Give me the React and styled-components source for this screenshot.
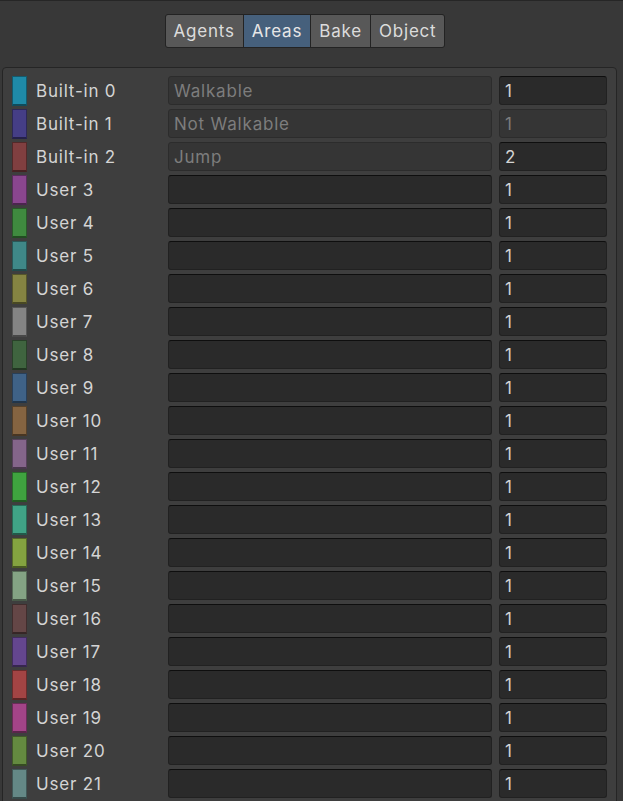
import React from 'react';
import styled, { createGlobalStyle } from 'styled-components';

const GlobalStyle = createGlobalStyle`
  html, body {
    margin: 0;
    padding: 0;
    background: #383838;
    overflow: hidden;
  }
  body {
    font-family: Inter, "Noto Sans", "Liberation Sans", sans-serif;
  }
`;

const areas = [
  { name: 'Built-in 0', color: '#1f8aa8', label: 'Walkable', cost: '1', builtIn: true },
  { name: 'Built-in 1', color: '#453e86', label: 'Not Walkable', cost: '1', builtIn: true, locked: true },
  { name: 'Built-in 2', color: '#803f40', label: 'Jump', cost: '2', builtIn: true },
  { name: 'User 3', color: '#8a468f', cost: '1' },
  { name: 'User 4', color: '#3f8a3f', cost: '1' },
  { name: 'User 5', color: '#3f8888', cost: '1' },
  { name: 'User 6', color: '#858442', cost: '1' },
  { name: 'User 7', color: '#848484', cost: '1' },
  { name: 'User 8', color: '#3f643f', cost: '1' },
  { name: 'User 9', color: '#3f6287', cost: '1' },
  { name: 'User 10', color: '#856441', cost: '1' },
  { name: 'User 11', color: '#84658a', cost: '1' },
  { name: 'User 12', color: '#3fa33f', cost: '1' },
  { name: 'User 13', color: '#40a386', cost: '1' },
  { name: 'User 14', color: '#84a340', cost: '1' },
  { name: 'User 15', color: '#84a384', cost: '1' },
  { name: 'User 16', color: '#644646', cost: '1' },
  { name: 'User 17', color: '#64468f', cost: '1' },
  { name: 'User 18', color: '#a34444', cost: '1' },
  { name: 'User 19', color: '#a34488', cost: '1' },
  { name: 'User 20', color: '#648a40', cost: '1' },
  { name: 'User 21', color: '#648886', cost: '1' },
];

const tabs = ['Agents', 'Areas', 'Bake', 'Object'];

export default function App() {
  return (
    <Root>
      <GlobalStyle />
      <Toolbar>
        <TabGroup>
          {tabs.map((t) => (
            <Tab key={t} active={t === 'Areas'}>{t}</Tab>
          ))}
        </TabGroup>
      </Toolbar>

      <Panel>
        {areas.map((a) => (
          <Row key={a.name}>
            <Swatch color={a.color} />
            <Label>{a.name}</Label>
            <NameField disabled={a.builtIn}>{a.label || ''}</NameField>
            <CostField disabled={a.locked}>{a.cost}</CostField>
          </Row>
        ))}
      </Panel>
    </Root>
  );
}

const Root = styled.div`
  width: 623px;
  height: 801px;
  border-top: 1px solid #262626;
  box-sizing: border-box;
`

const Toolbar = styled.div`
  display: flex;
  justify-content: center;
  padding: 13px 13px 0 0;
  height: 66px;
  box-sizing: border-box;
`

const TabGroup = styled.div`
  display: flex;
  height: 34px;
  border: 1px solid #232323;
  border-radius: 3px;
  overflow: hidden;
  background: #232323;
  gap: 1px;
  box-sizing: border-box;
`

const Tab = styled.div`
  display: flex;
  align-items: center;
  padding: 0 8px;
  font-size: 17px;
  letter-spacing: 0.8px;
  color: ${(p) => (p.active ? '#e6e6e6' : '#dcdcdc')};
  background: ${(p) => (p.active ? '#46607c' : '#585858')};
`

const Panel = styled.div`
  margin: 0 6px 0 2px;
  padding: 8px 8px 0 9px;
  background: #3e3e3e;
  border: 1px solid #252525;
  border-radius: 4px;
  display: flex;
  flex-direction: column;
  gap: 4px;
  height: 760px;
  box-sizing: border-box;
`

const Row = styled.div`
  display: flex;
  align-items: center;
  height: 29px;
`

const Swatch = styled.div`
  width: 15px;
  height: 30px;
  flex: none;
  background: ${(p) => p.color};
  box-sizing: border-box;
  border: 1px solid rgba(0, 0, 0, 0.35);
  border-bottom: 2px solid rgba(0, 0, 0, 0.45);
`

const Label = styled.div`
  width: 132px;
  margin-left: 9px;
  font-size: 17px;
  letter-spacing: 0.8px;
  color: #d4d4d4;
  white-space: nowrap;
`

const Field = styled.div`
  height: 29px;
  box-sizing: border-box;
  border-radius: 3px;
  padding: 0 5px;
  display: flex;
  align-items: center;
  font-size: 17px;
  letter-spacing: 0.8px;
  white-space: nowrap;
  background: ${(p) => (p.disabled ? '#353535' : '#2a2a2a')};
  border: 1px solid ${(p) => (p.disabled ? '#2c2c2c' : '#212121')};
  border-top-color: ${(p) => (p.disabled ? '#2c2c2c' : '#0e0e0e')};
  color: ${(p) => (p.disabled ? '#7d7d7d' : '#d4d4d4')};
`

const NameField = styled(Field)`
  width: 324px;
`

const CostField = styled(Field)`
  width: 108px;
  margin-left: 7px;
`
